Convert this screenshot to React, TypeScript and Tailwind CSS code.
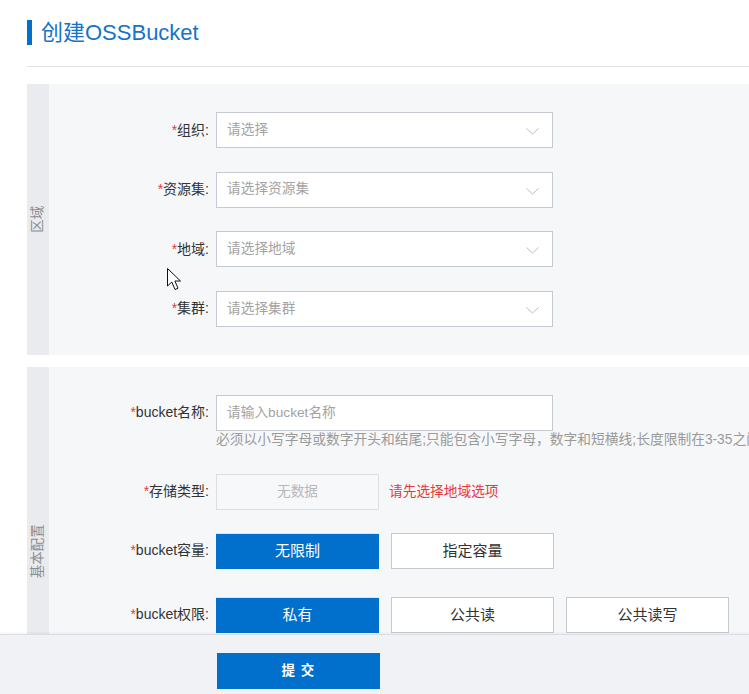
import React from "react";

const FONT = "font-['Liberation_Sans','Noto_Sans_CJK_SC',sans-serif]";

function Label({ text }: { text: string }) {
  return (
    <div className="w-[160px] shrink-0 whitespace-nowrap text-right text-[14px] text-[#333]">
      <span className="text-[#e4393c]">*</span>
      {text}:
    </div>
  );
}

function Chevron() {
  return (
    <svg width="13" height="7" viewBox="0 0 13 7" className="absolute right-[13px] top-[15px]">
      <polyline points="0.5,0.5 6.5,6 12.5,0.5" fill="none" stroke="#b9bdc6" strokeWidth="1" />
    </svg>
  );
}

function SelectRow({ label, placeholder }: { label: string; placeholder: string }) {
  return (
    <div className="flex items-center gap-[7px]">
      <Label text={label} />
      <div className="relative flex h-[36px] w-[337px] items-center border border-[#c6c9d1] bg-white pl-[10px] text-[13.7px] text-[#a3a3a3]">
        {placeholder}
        <Chevron />
      </div>
    </div>
  );
}

function Strip({ text }: { text: string }) {
  return (
    <div className="relative flex w-[22px] shrink-0 items-center justify-center bg-[#eaebef]">
      <span className="-rotate-90 whitespace-nowrap text-[13.5px] text-[#8d8d8d]">{text}</span>
    </div>
  );
}

function Btn({ text, active }: { text: string; active?: boolean }) {
  return (
    <div
      className={
        active
          ? "flex h-[36px] w-[163px] items-center justify-center border-t border-t-[#d6e6f5] bg-[#0070cc] text-[15px] text-white"
          : "flex h-[36px] w-[163px] items-center justify-center border border-[#c6c9d1] bg-white text-[15px] text-[#333]"
      }
    >
      {text}
    </div>
  );
}

export default function App() {
  return (
    <div className={`relative h-[694px] w-full overflow-hidden bg-white ${FONT}`}>
      <div className="pl-[27px]">
        <div className="flex h-[66px] items-start pt-[20px]">
          <div className="flex items-center gap-[9px]">
            <span className="h-[25px] w-[5px] bg-[#0070cc]" />
            <span className="text-[22px] leading-[25px] text-[#1673c9]">创建OSSBucket</span>
          </div>
        </div>
        <div className="h-px bg-[#e1e2e8]" />

        <div className="mt-[17px] flex bg-[#f6f7f9]">
          <Strip text="区域" />
          <div className="flex flex-1 flex-col gap-[23.67px] py-[28px]">
            <SelectRow label="组织" placeholder="请选择" />
            <SelectRow label="资源集" placeholder="请选择资源集" />
            <SelectRow label="地域" placeholder="请选择地域" />
            <SelectRow label="集群" placeholder="请选择集群" />
          </div>
        </div>

        <div className="mt-[12px] flex bg-[#f6f7f9]">
          <Strip text="基本配置" />
          <div className="flex flex-1 flex-col pb-[102px] pt-[28px]">
            <div className="flex items-center gap-[7px]">
              <Label text="bucket名称" />
              <div className="flex h-[36px] w-[337px] items-center border border-[#c6c9d1] bg-white pl-[10px] text-[13.7px] text-[#a3a3a3]">
                请输入bucket名称
              </div>
            </div>
            <div className="ml-[167px] h-[18px] whitespace-nowrap text-[13.75px] leading-[18px] text-[#9a9a9a]">
              必须以小写字母或数字开头和结尾;只能包含小写字母，数字和短横线;长度限制在3-35之间
            </div>

            <div className="mt-[25px] flex items-center gap-[7px]">
              <Label text="存储类型" />
              <div className="flex h-[36px] w-[163px] items-center justify-center border border-[#dcdee3] bg-[#f7f8fa] text-[13.7px] text-[#b7b7b7]">
                无数据
              </div>
              <span className="ml-[3px] text-[13.7px] text-[#e4393c]">请先选择地域选项</span>
            </div>

            <div className="mt-[23px] flex items-center gap-[7px]">
              <Label text="bucket容量" />
              <div className="flex gap-[12px]">
                <Btn text="无限制" active />
                <Btn text="指定容量" />
              </div>
            </div>

            <div className="mt-[28px] flex items-center gap-[7px]">
              <Label text="bucket权限" />
              <div className="flex gap-[12px]">
                <Btn text="私有" active />
                <Btn text="公共读" />
                <Btn text="公共读写" />
              </div>
            </div>
          </div>
        </div>
      </div>

      <div className="absolute bottom-0 left-0 right-0 h-[60px] border-t border-[#dcdde2] bg-[#f1f2f5] shadow-[0_-1px_3px_rgba(0,0,0,0.06)]">
        <div className="ml-[217px] mt-[18px] flex h-[36px] w-[163px] items-center justify-center bg-[#0070cc] text-[13.5px] font-bold tracking-[1px] text-white">
          提 交
        </div>
      </div>

      <svg
        width="16"
        height="24"
        viewBox="0 0 16 24"
        className="absolute left-[167px] top-[268px]"
      >
        <path
          d="M0.5 0.5 L0.5 18 L4.8 14 L8 21.5 L11 20.2 L7.9 13 L13.5 13 Z"
          fill="white"
          stroke="#111"
          strokeWidth="1"
          strokeLinejoin="miter"
        />
      </svg>
    </div>
  );
}
